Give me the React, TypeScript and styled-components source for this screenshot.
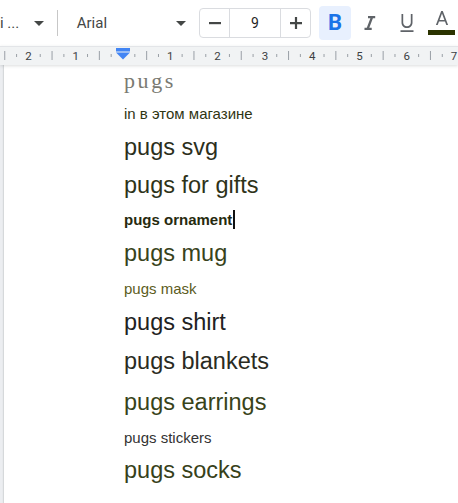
import styled, { createGlobalStyle } from "styled-components";

const GlobalStyle = createGlobalStyle`
  html, body {
    margin: 0;
    padding: 0;
    background: #ffffff;
  }
  body {
    font-family: "Liberation Sans", Arial, sans-serif;
  }
`;

const colors = {
  icon: "#444746",
  glyph: "#5f6368",
  border: "#dadce0",
  rulerBg: "#f1f3f4",
  canvas: "#eceef1",
  blue: "#1a73e8",
  blueBg: "#e8f0fe",
  olive: "#2b3300",
};

const Window = styled.div`
  width: 458px;
  height: 503px;
  overflow: hidden;
  display: flex;
  flex-direction: column;
  background: #ffffff;
`;

const Toolbar = styled.div`
  height: 46px;
  flex-shrink: 0;
  display: flex;
  align-items: center;
  background: #ffffff;
  font-family: Roboto, "Liberation Sans", sans-serif;
  color: ${colors.icon};
`;

const Select = styled.div<{ $width: number; $pad: number }>`
  width: ${({ $width }) => $width}px;
  padding-left: ${({ $pad }) => $pad}px;
  padding-right: 13px;
  box-sizing: border-box;
  height: 30px;
  display: flex;
  align-items: center;
  justify-content: space-between;
  font-size: 15px;
  white-space: nowrap;
`;

const Separator = styled.div`
  width: 1px;
  height: 26px;
  background: #c7c7c7;
  flex-shrink: 0;
`;

const SizeBox = styled.div`
  display: flex;
  height: 30px;
  border: 1px solid ${colors.border};
  border-radius: 4px;
  box-sizing: border-box;
  margin-right: 8px;
`;

const SizeButton = styled.div`
  width: 29px;
  display: flex;
  align-items: center;
  justify-content: center;
`;

const SizeValue = styled.div`
  width: 50px;
  border-left: 1px solid ${colors.border};
  border-right: 1px solid ${colors.border};
  display: flex;
  align-items: center;
  justify-content: center;
  font-size: 14px;
  color: #1f1f1f;
`;

const IconButton = styled.div<{ $active?: boolean; $width: number }>`
  width: ${({ $width }) => $width}px;
  height: 34px;
  border-radius: 4px;
  display: flex;
  flex-direction: column;
  align-items: center;
  justify-content: center;
  flex-shrink: 0;
  background: ${({ $active }) => ($active ? colors.blueBg : "transparent")};
`;

const BoldGlyph = styled.span`
  font-family: Roboto, "Liberation Sans", sans-serif;
  font-weight: 700;
  font-size: 22px;
  line-height: 1;
  color: ${colors.blue};
`;

const ColorBar = styled.div<{ $color: string }>`
  width: 27px;
  height: 5px;
  margin-top: 1px;
  background: ${({ $color }) => $color};
`;

const RulerBar = styled.div`
  height: 18px;
  flex-shrink: 0;
  background: ${colors.rulerBg};
  border-top: 1px solid #e3e5e8;
  position: relative;
  z-index: 1;
  box-shadow: 0 1px 3px rgba(60, 64, 67, 0.18);
`;

const Canvas = styled.div`
  flex: 1;
  display: flex;
  background: ${colors.canvas};
`;

const Page = styled.div`
  flex: 1;
  margin-left: 4px;
  background: #ffffff;
  box-shadow: -1px 0 1px rgba(60, 64, 67, 0.12);
  padding-left: 120px;
  padding-top: 3px;
  display: flex;
  flex-direction: column;
`;

const Line = styled.div<{
  $size: number;
  $height: number;
  $gap: number;
  $color: string;
  $bold?: boolean;
  $typewriter?: boolean;
}>`
  font-family: ${({ $typewriter }) =>
    $typewriter ? `"Liberation Serif", "Courier New", serif` : `"Liberation Sans", Arial, sans-serif`};
  font-size: ${({ $size }) => $size}px;
  letter-spacing: ${({ $typewriter }) => ($typewriter ? "2.6px" : "normal")};
  line-height: ${({ $height }) => $height}px;
  margin-top: ${({ $gap }) => $gap}px;
  font-weight: ${({ $bold }) => ($bold ? 700 : 400)};
  color: ${({ $color }) => $color};
  white-space: nowrap;
`;

const Caret = styled.span`
  display: inline-block;
  width: 2px;
  height: 19px;
  margin-left: 1px;
  vertical-align: -4px;
  background: #111111;
`;

function DropArrow() {
  return (
    <svg width="10" height="5" viewBox="0 0 10 5">
      <path d="M0 0h10L5 5z" fill={colors.icon} />
    </svg>
  );
}

function Minus() {
  return (
    <svg width="14" height="14" viewBox="0 0 14 14">
      <path d="M1 6h12v2.2H1z" fill={colors.icon} />
    </svg>
  );
}

function Plus() {
  return (
    <svg width="14" height="14" viewBox="0 0 14 14">
      <path d="M1 6h12v2.2H1zM5.9 1h2.2v12H5.9z" fill={colors.icon} />
    </svg>
  );
}

function ItalicIcon() {
  return (
    <svg width="24" height="24" viewBox="0 0 24 24">
      <path d="M10 5v2.2h2.4l-3.6 9.6H6.5V19h7.2v-2.2h-2.4l3.6-9.6h2.3V5z" fill={colors.glyph} />
    </svg>
  );
}

function UnderlineIcon() {
  return (
    <svg width="24" height="24" viewBox="0 0 24 24">
      <path
        d="M12 17c3.1 0 5.5-2.5 5.5-5.6V3h-1.7v8.4c0 2.1-1.7 3.8-3.8 3.8s-3.8-1.7-3.8-3.8V3H6.5v8.4C6.5 14.5 8.9 17 12 17zM5.5 19.3v1.6h13v-1.6z"
        fill={colors.glyph}
      />
    </svg>
  );
}

function TextColorIcon() {
  return (
    <svg width="24" height="18" viewBox="0 3 24 18">
      <path
        d="M11.2 3L5.9 17h1.8l1.3-3.6h6l1.3 3.6h1.8L12.8 3h-1.6zm-1.6 8.9L12 5.4l2.4 6.5H9.6z"
        fill={colors.glyph}
      />
    </svg>
  );
}

// ruler: one inch = 47.3px, zero (left margin) at x = 123
function Ruler() {
  const inch = 47.3;
  const zero = 123;
  const marks: JSX.Element[] = [];
  for (let q = -12; q <= 32; q++) {
    const x = zero + (q * inch) / 4;
    if (x < -2 || x > 460) continue;
    if (q % 4 === 0) {
      if (q === 0) continue;
      marks.push(
        <text
          key={q}
          x={x}
          y={12.5}
          fontSize="11.5"
          fontFamily="Roboto, 'Liberation Sans', sans-serif"
          fill="#3c4043"
          textAnchor="middle"
        >
          {Math.abs(q / 4)}
        </text>
      );
    } else if (q % 2 === 0) {
      marks.push(<rect key={q} x={x - 0.5} y={4} width={1} height={9} fill="#9aa0a6" />);
    } else {
      marks.push(<rect key={q} x={x - 0.5} y={7} width={1} height={3} fill="#9aa0a6" />);
    }
  }
  return (
    <svg width="458" height="17" style={{ display: "block" }}>
      {marks}
      <rect x={116} y={1} width={14} height={3.5} fill="#4285f4" />
      <path d="M116 5.5h14L123 12.5z" fill="#4285f4" />
    </svg>
  );
}

type Entry = {
  text: string;
  size: number;
  height: number;
  gap: number;
  color: string;
  bold?: boolean;
  typewriter?: boolean;
  caret?: boolean;
};

const entries: Entry[] = [
  { text: "pugs", size: 22, height: 26, gap: 0, color: "#7a7a72", typewriter: true },
  { text: "in в этом магазине", size: 15, height: 20, gap: 10, color: "#2f3514" },
  { text: "pugs svg", size: 23.5, height: 28, gap: 8.5, color: "#2c2f1c" },
  { text: "pugs for gifts", size: 23.5, height: 28, gap: 10, color: "#2e3319" },
  { text: "pugs ornament", size: 15, height: 20, gap: 11.5, color: "#262a0e", bold: true, caret: true },
  { text: "pugs mug", size: 23.5, height: 28, gap: 8.5, color: "#38431b" },
  { text: "pugs mask", size: 15, height: 20, gap: 12.5, color: "#5c5c22" },
  { text: "pugs shirt", size: 23.5, height: 28, gap: 8.5, color: "#222222" },
  { text: "pugs blankets", size: 23.5, height: 28, gap: 11, color: "#2a2b22" },
  { text: "pugs earrings", size: 23.5, height: 28, gap: 13, color: "#38431a" },
  { text: "pugs stickers", size: 15, height: 20, gap: 12.5, color: "#333333" },
  { text: "pugs socks", size: 23.5, height: 28, gap: 7.5, color: "#37411a" },
];

export default function App() {
  return (
    <Window>
      <GlobalStyle />
      <Toolbar>
        <Select $width={57} $pad={0}>
          <span>i ...</span>
          <DropArrow />
        </Select>
        <Separator />
        <Select $width={142} $pad={19}>
          <span>Arial</span>
          <DropArrow />
        </Select>
        <SizeBox>
          <SizeButton>
            <Minus />
          </SizeButton>
          <SizeValue>9</SizeValue>
          <SizeButton>
            <Plus />
          </SizeButton>
        </SizeBox>
        <IconButton $active $width={32}>
          <BoldGlyph>B</BoldGlyph>
        </IconButton>
        <IconButton $width={37}>
          <ItalicIcon />
        </IconButton>
        <IconButton $width={37}>
          <UnderlineIcon />
        </IconButton>
        <IconButton $width={33}>
          <TextColorIcon />
          <ColorBar $color={colors.olive} />
        </IconButton>
      </Toolbar>
      <RulerBar>
        <Ruler />
      </RulerBar>
      <Canvas>
        <Page>
          {entries.map((e) => (
            <Line
              key={e.text}
              $size={e.size}
              $height={e.height}
              $gap={e.gap}
              $color={e.color}
              $bold={e.bold}
              $typewriter={e.typewriter}
            >
              {e.text}
              {e.caret && <Caret />}
            </Line>
          ))}
        </Page>
      </Canvas>
    </Window>
  );
}
